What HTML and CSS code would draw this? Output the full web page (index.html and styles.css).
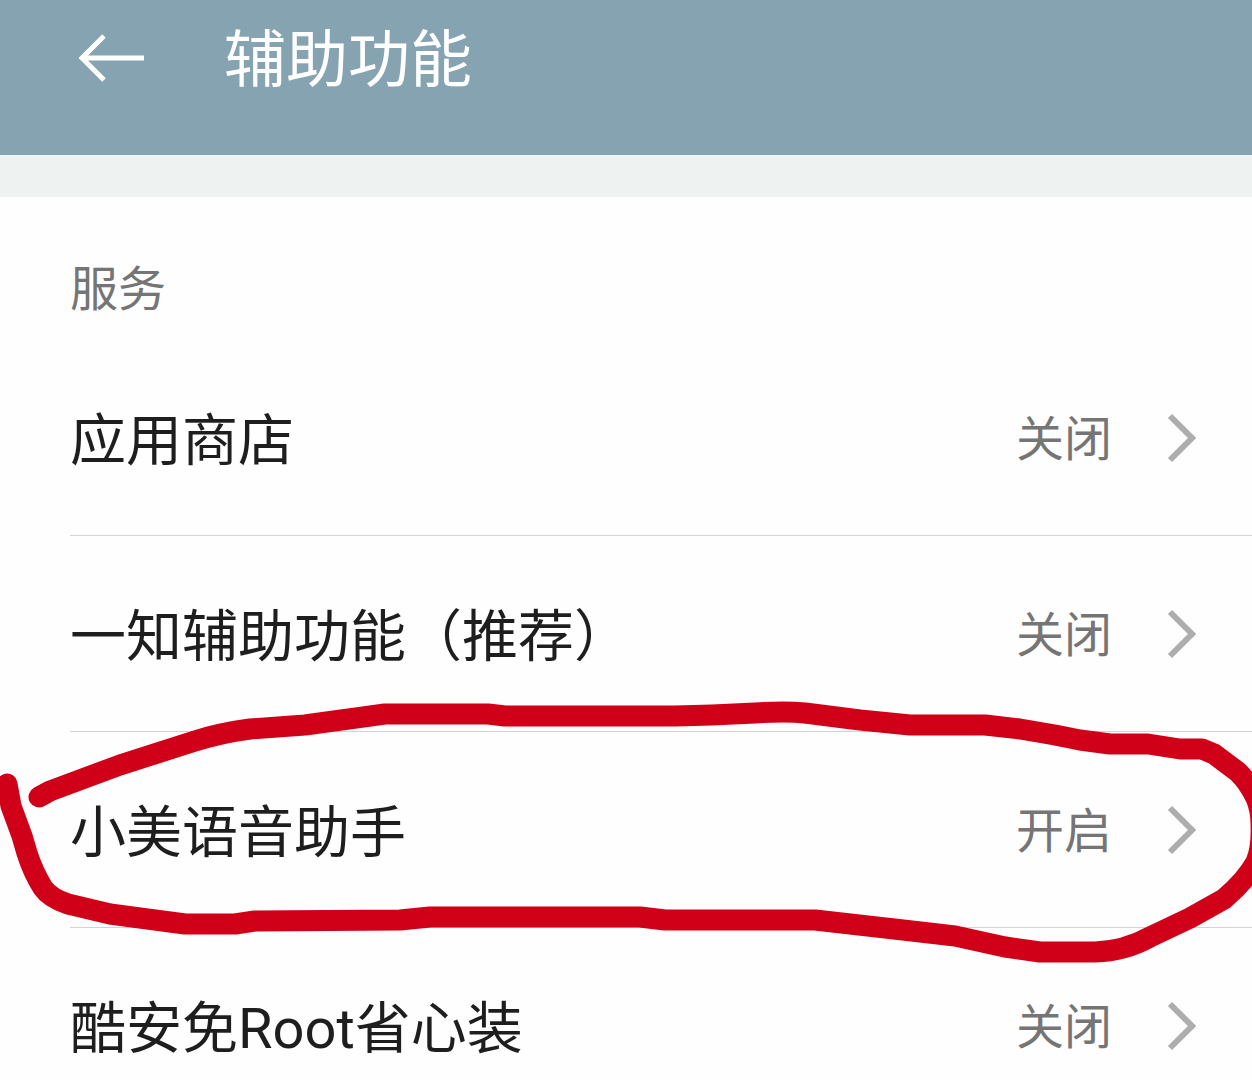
FILE: index.html
```html
<!DOCTYPE html>
<html lang="zh-CN">
<head>
<meta charset="utf-8">
<meta name="viewport" content="width=device-width, initial-scale=1">
<title>辅助功能</title>
<link rel="stylesheet" href="styles.css">
</head>
<body>
<header class="app-bar">
  <button class="back" type="button" aria-label="返回">
    <svg width="68" height="50" viewBox="0 0 68 50" aria-hidden="true"><path d="M66 25H4M26 3L4 25l22 22"/></svg>
  </button>
  <h1 class="title">辅助功能</h1>
</header>
<main class="content">
  <h2 class="section-title">服务</h2>
  <ul class="list">
    <li class="item">
      <a class="row" href="#store">
        <span class="name">应用商店</span>
        <span class="value">关闭</span>
        <svg class="chevron" width="30" height="50" viewBox="0 0 30 50" aria-hidden="true"><path d="M3 3l22 22L3 47"/></svg>
      </a>
    </li>
    <li class="item">
      <a class="row" href="#yizhi">
        <span class="name">一知辅助功能（推荐）</span>
        <span class="value">关闭</span>
        <svg class="chevron" width="30" height="50" viewBox="0 0 30 50" aria-hidden="true"><path d="M3 3l22 22L3 47"/></svg>
      </a>
    </li>
    <li class="item">
      <a class="row" href="#xiaomei">
        <span class="name">小美语音助手</span>
        <span class="value">开启</span>
        <svg class="chevron" width="30" height="50" viewBox="0 0 30 50" aria-hidden="true"><path d="M3 3l22 22L3 47"/></svg>
      </a>
      <svg class="marker" viewBox="0 732 1252 196" preserveAspectRatio="none" aria-hidden="true">
        <path d="M39 797L50 791L120 765L195 741Q220 733 250 729L305 725L385 714H488L505 716H675L712 715L755 713Q785 711 805 713L860 720L910 725H985L1020 729L1055 735L1080 740L1110 744H1148L1180 749H1202L1214 754L1238 772Q1249 783 1256 798Q1261 810 1261 824Q1262 848 1256 862Q1246 880 1224 899L1190 918L1150 937Q1125 951 1095 952H1040L1005 947L955 936L903 930L815 920H665L640 917H430L400 920L255 921L235 924H185L155 920L110 914L68 904Q50 898 43 888Q33 872 27 853L22 836L11 806L7 784"/>
      </svg>
    </li>
    <li class="item">
      <a class="row" href="#coolapk">
        <span class="name">酷安免Root省心装</span>
        <span class="value">关闭</span>
        <svg class="chevron" width="30" height="50" viewBox="0 0 30 50" aria-hidden="true"><path d="M3 3l22 22L3 47"/></svg>
      </a>
    </li>
  </ul>
</main>
</body>
</html>
```
FILE: styles.css
```css
* {
  box-sizing: border-box;
}

body {
  display: flex;
  flex-direction: column;
  height: 100vh;
  margin: 0;
  overflow: hidden;
  background: #fefefe;
  color: #1e1e1e;
  font-family: Roboto, "Noto Sans CJK SC", sans-serif;
}

.app-bar {
  display: flex;
  flex: none;
  align-items: center;
  gap: 78px;
  padding: 12px 78px 51px;
  background: #86a3b1;
  color: #fff;
}

.back {
  display: flex;
  padding: 0;
  border: 0;
  background: none;
  color: inherit;
}

.back path {
  fill: none;
  stroke: currentColor;
  stroke-width: 5;
}

.title {
  margin: 0;
  padding-top: 6px;
  font-size: 62px;
  font-weight: 400;
  line-height: 86px;
}

.content {
  flex: 1;
  min-height: 0;
  border-top: 42px solid #eef3f2;
}

.section-title {
  margin: 0;
  padding: 58px 70px 15px;
  color: #757575;
  font-size: 48px;
  font-weight: 400;
  line-height: 70px;
}

.list {
  margin: 0;
  padding: 0;
  list-style: none;
}

.item {
  position: relative;
  padding-left: 70px;
}

.row {
  display: flex;
  align-items: center;
  padding: 56px 55px 55px 0;
  border-bottom: 1px solid #d2d4d4;
  color: inherit;
  text-decoration: none;
}

.name {
  flex: 1;
  padding-top: 6px;
  font-size: 56px;
  line-height: 78px;
}

.value {
  margin-right: 55px;
  padding-top: 4px;
  color: #757575;
  font-size: 48px;
  line-height: 70px;
}

.chevron {
  fill: none;
  stroke: #adadad;
  stroke-width: 6;
}

.marker {
  position: absolute;
  inset: 0;
  width: 100%;
  height: 100%;
  overflow: visible;
  pointer-events: none;
  fill: none;
  stroke: #d00018;
  stroke-width: 21;
  stroke-linecap: round;
  stroke-linejoin: round;
}
```
